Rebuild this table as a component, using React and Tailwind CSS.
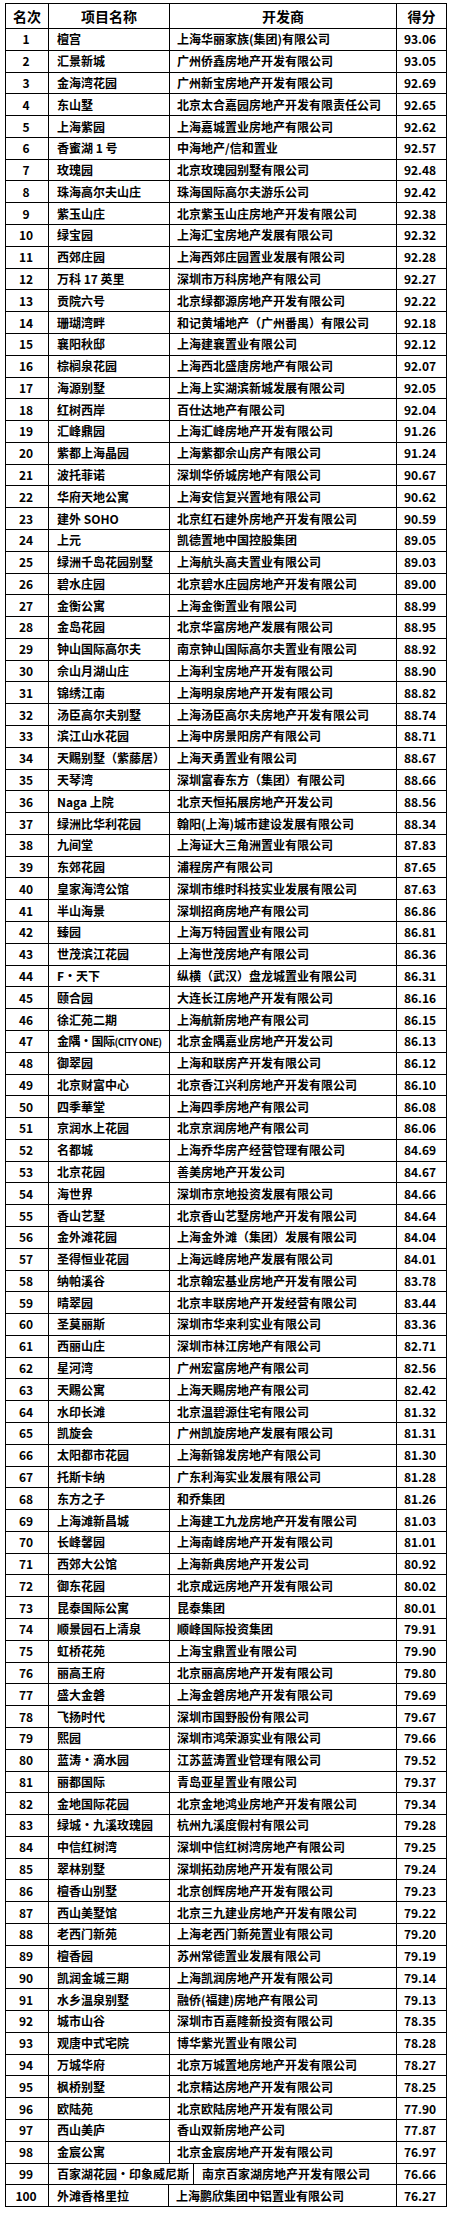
import React from 'react';

const rows = [
    ['檀宫', '上海华丽家族(集团)有限公司', '93.06'],
    ['汇景新城', '广州侨鑫房地产开发有限公司', '93.05'],
    ['金海湾花园', '广州新宝房地产开发有限公司', '92.69'],
    ['东山墅', '北京太合嘉园房地产开发有限责任公司', '92.65'],
    ['上海紫园', '上海嘉城置业房地产有限公司', '92.62'],
    ['香蜜湖 1 号', '中海地产/信和置业', '92.57'],
    ['玫瑰园', '北京玫瑰园别墅有限公司', '92.48'],
    ['珠海高尔夫山庄', '珠海国际高尔夫游乐公司', '92.42'],
    ['紫玉山庄', '北京紫玉山庄房地产开发有限公司', '92.38'],
    ['绿宝园', '上海汇宝房地产发展有限公司', '92.32'],
    ['西郊庄园', '上海西郊庄园置业发展有限公司', '92.28'],
    ['万科 17 英里', '深圳市万科房地产有限公司', '92.27'],
    ['贡院六号', '北京绿都源房地产开发有限公司', '92.22'],
    ['珊瑚湾畔', '和记黄埔地产（广州番禺）有限公司', '92.18'],
    ['襄阳秋邸', '上海建襄置业有限公司', '92.12'],
    ['棕榈泉花园', '上海西北盛唐房地产有限公司', '92.07'],
    ['海源别墅', '上海上实湖滨新城发展有限公司', '92.05'],
    ['红树西岸', '百仕达地产有限公司', '92.04'],
    ['汇峰鼎园', '上海汇峰房地产开发有限公司', '91.26'],
    ['紫都上海晶园', '上海紫都佘山房产有限公司', '91.24'],
    ['波托菲诺', '深圳华侨城房地产有限公司', '90.67'],
    ['华府天地公寓', '上海安信复兴置地有限公司', '90.62'],
    ['建外 SOHO', '北京红石建外房地产开发有限公司', '90.59'],
    ['上元', '凯德置地中国控股集团', '89.05'],
    ['绿洲千岛花园别墅', '上海航头高夫置业有限公司', '89.03'],
    ['碧水庄园', '北京碧水庄园房地产开发有限公司', '89.00'],
    ['金衡公寓', '上海金衡置业有限公司', '88.99'],
    ['金岛花园', '北京华富房地产发展有限公司', '88.95'],
    ['钟山国际高尔夫', '南京钟山国际高尔夫置业有限公司', '88.92'],
    ['佘山月湖山庄', '上海利宝房地产开发有限公司', '88.90'],
    ['锦绣江南', '上海明泉房地产开发有限公司', '88.82'],
    ['汤臣高尔夫别墅', '上海汤臣高尔夫房地产开发有限公司', '88.74'],
    ['滨江山水花园', '上海中房景阳房产有限公司', '88.71'],
    ['天赐别墅（紫藤居）', '上海天勇置业有限公司', '88.67'],
    ['天琴湾', '深圳富春东方（集团）有限公司', '88.66'],
    ['Naga 上院', '北京天恒拓展房地产开发公司', '88.56'],
    ['绿洲比华利花园', '翰阳(上海)城市建设发展有限公司', '88.34'],
    ['九间堂', '上海证大三角洲置业有限公司', '87.83'],
    ['东郊花园', '浦程房产有限公司', '87.65'],
    ['皇家海湾公馆', '深圳市维时科技实业发展有限公司', '87.63'],
    ['半山海景', '深圳招商房地产有限公司', '86.86'],
    ['臻园', '上海万特园置业有限公司', '86.81'],
    ['世茂滨江花园', '上海世茂房地产有限公司', '86.36'],
    ['F·天下', '纵横（武汉）盘龙城置业有限公司', '86.31'],
    ['颐合园', '大连长江房地产开发有限公司', '86.16'],
    ['徐汇苑二期', '上海航新房地产有限公司', '86.15'],
    ['金隅·国际(CITY ONE)', '北京金隅嘉业房地产开发公司', '86.13'],
    ['御翠园', '上海和联房产开发有限公司', '86.12'],
    ['北京财富中心', '北京香江兴利房地产开发有限公司', '86.10'],
    ['四季華堂', '上海四季房地产有限公司', '86.08'],
    ['京润水上花园', '北京京润房地产有限公司', '86.06'],
    ['名都城', '上海乔华房产经营管理有限公司', '84.69'],
    ['北京花园', '善美房地产开发公司', '84.67'],
    ['海世界', '深圳市京地投资发展有限公司', '84.66'],
    ['香山艺墅', '北京香山艺墅房地产开发有限公司', '84.64'],
    ['金外滩花园', '上海金外滩（集团）发展有限公司', '84.04'],
    ['圣得恒业花园', '上海远峰房地产发展有限公司', '84.01'],
    ['纳帕溪谷', '北京翰宏基业房地产开发有限公司', '83.78'],
    ['晴翠园', '北京丰联房地产开发经营有限公司', '83.44'],
    ['圣莫丽斯', '深圳市华来利实业有限公司', '83.36'],
    ['西丽山庄', '深圳市林江房地产有限公司', '82.71'],
    ['星河湾', '广州宏富房地产有限公司', '82.56'],
    ['天赐公寓', '上海天赐房地产有限公司', '82.42'],
    ['水印长滩', '北京温碧源住宅有限公司', '81.32'],
    ['凯旋会', '广州凯旋房地产发展有限公司', '81.31'],
    ['太阳都市花园', '上海新锦发房地产有限公司', '81.30'],
    ['托斯卡纳', '广东利海实业发展有限公司', '81.28'],
    ['东方之子', '和乔集团', '81.26'],
    ['上海滩新昌城', '上海建工九龙房地产开发有限公司', '81.03'],
    ['长峰馨园', '上海南峰房地产开发有限公司', '81.01'],
    ['西郊大公馆', '上海新典房地产开发公司', '80.92'],
    ['御东花园', '北京成远房地产开发有限公司', '80.02'],
    ['昆泰国际公寓', '昆泰集团', '80.01'],
    ['顺景园石上清泉', '顺峰国际投资集团', '79.91'],
    ['虹桥花苑', '上海宝鼎置业有限公司', '79.90'],
    ['丽高王府', '北京丽高房地产开发有限公司', '79.80'],
    ['盛大金磐', '上海金磐房地产开发有限公司', '79.69'],
    ['飞扬时代', '深圳市国野股份有限公司', '79.67'],
    ['熙园', '深圳市鸿荣源实业有限公司', '79.66'],
    ['蓝涛·滴水园', '江苏蓝涛置业管理有限公司', '79.52'],
    ['丽都国际', '青岛亚星置业有限公司', '79.37'],
    ['金地国际花园', '北京金地鸿业房地产开发有限公司', '79.34'],
    ['绿城·九溪玫瑰园', '杭州九溪度假村有限公司', '79.28'],
    ['中信红树湾', '深圳中信红树湾房地产有限公司', '79.25'],
    ['翠林别墅', '深圳拓劲房地产开发有限公司', '79.24'],
    ['檀香山别墅', '北京创辉房地产开发有限公司', '79.23'],
    ['西山美墅馆', '北京三九建业房地产开发有限公司', '79.22'],
    ['老西门新苑', '上海老西门新苑置业有限公司', '79.20'],
    ['檀香园', '苏州常德置业发展有限公司', '79.19'],
    ['凯润金城三期', '上海凯润房地产开发有限公司', '79.14'],
    ['水乡温泉别墅', '融侨(福建)房地产有限公司', '79.13'],
    ['城市山谷', '深圳市百嘉隆新投资有限公司', '78.35'],
    ['观唐中式宅院', '博华紫光置业有限公司', '78.28'],
    ['万城华府', '北京万城置地房地产开发有限公司', '78.27'],
    ['枫桥别墅', '北京精达房地产开发有限公司', '78.25'],
    ['欧陆苑', '北京欧陆房地产开发有限公司', '77.90'],
    ['西山美庐', '香山双新房地产公司', '77.87'],
    ['金宸公寓', '北京金宸房地产开发有限公司', '76.97'],
    ['百家湖花园·印象威尼斯', '南京百家湖房地产开发有限公司', '76.66'],
    ['外滩香格里拉', '上海鹏欣集团中铝置业有限公司', '76.27'],
];

// row 99 and 100 have their own column split in the source image
const gridFor = (n) => {
    if (n === 99) return 'grid-cols-[43px_145px_203px_50px]';
    if (n === 100) return 'grid-cols-[43px_120px_228px_50px]';
    return 'grid-cols-[43px_121px_227px_50px]';
};

const NameCell = ({ name }) => {
    // the long latin name is squeezed in the original
    if (name.includes('CITY ONE')) {
        return (
            <span className="tracking-[-0.5px]">
                金隅·国际<span className="text-[10px] tracking-[-0.6px]">(CITY ONE)</span>
            </span>
        );
    }
    return name;
};

const Row = ({ n, name, dev, score }) => (
    <div className={`grid ${gridFor(n)} h-[21.79px] border-b border-black`}>
        <div className="flex items-center justify-center border-r border-black pr-[2px]">{n}</div>
        <div className="flex items-center overflow-hidden whitespace-nowrap border-r border-black pl-[8px]">
            <NameCell name={name} />
        </div>
        <div className={`flex items-center overflow-hidden whitespace-nowrap border-r border-black ${n === 99 ? 'pl-[8px]' : 'pl-[7px]'}`}>{dev}</div>
        <div className="flex items-center justify-center border-r border-black pr-[3px]">{score}</div>
    </div>
);

export default function App() {
    return (
        <div className="w-[452px] h-[2219px] bg-white pl-[5px] pt-[3px] text-black font-['Noto_Sans_CJK_SC','Noto_Sans',sans-serif]">
            <div className="w-[442px] border-l border-t border-black text-[12px] font-bold leading-none">
                <div className="grid grid-cols-[43px_121px_227px_50px] h-[25px] border-b border-black text-[14px]">
                    <div className="flex items-center justify-center border-r border-black">名次</div>
                    <div className="flex items-center justify-center border-r border-black">项目名称</div>
                    <div className="flex items-center justify-center border-r border-black">开发商</div>
                    <div className="flex items-center justify-center border-r border-black">得分</div>
                </div>
                {rows.map(([name, dev, score], i) => (
                    <Row key={i} n={i + 1} name={name} dev={dev} score={score} />
                ))}
            </div>
        </div>
    );
}
